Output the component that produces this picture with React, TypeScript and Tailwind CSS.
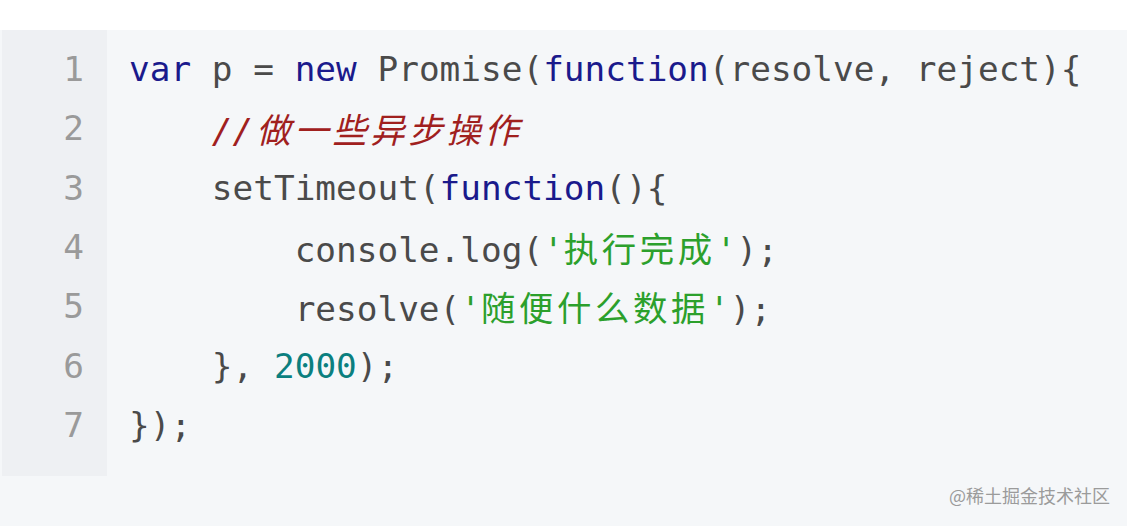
import React from "react";

const mono = { fontFamily: '"DejaVu Sans Mono", "Noto Sans CJK SC", monospace' };

const K = ({ children }: { children: React.ReactNode }) => <span className="text-[#1a1a8c]">{children}</span>;
const S = ({ children }: { children: React.ReactNode }) => <span className="text-[#2ca02c]">{children}</span>;
const Z = ({ children }: { children: React.ReactNode }) => (
  <span className="tracking-[3.6px]" style={{ fontFamily: '"Noto Sans CJK SC", sans-serif' }}>{children}</span>
);

export default function App() {
  const lines: React.ReactNode[] = [
    <>
      <K>var</K> p = <K>new</K> Promise(<K>function</K>(resolve, reject){"{"}
    </>,
    <>
      {"    "}
      <span className="italic text-[#a0201e]">
        //
        <span
          className="tracking-[3.6px] pl-[3px]"
          style={{ fontFamily: '"Noto Sans CJK SC", sans-serif' }}
        >
          做一些异步操作
        </span>
      </span>
    </>,
    <>
      {"    "}setTimeout(<K>function</K>(){"{"}
    </>,
    <>
      {"        "}console.log(<S>'<Z>执行完成</Z>'</S>);
    </>,
    <>
      {"        "}resolve(<S>'<Z>随便什么数据</Z>'</S>);
    </>,
    <>
      {"    "}{"}"}, <span className="text-[#0b7f7f]">2000</span>);
    </>,
    <>{"});"}</>,
  ];

  return (
    <div className="w-[1127px] h-[526px] bg-white overflow-hidden">
      <div className="mt-[30px] h-[496px] bg-[#f5f7f9] pl-[2px] flex flex-col">
        <div className="flex">
          <div
            className="w-[105px] bg-[#eef0f3] pt-[10px] pb-[21px] pr-[23px] text-right text-[#9a9a9a] text-[34.4px] leading-[59.33px]"
            style={mono}
          >
            {lines.map((_, i) => (
              <div key={i}>{i + 1}</div>
            ))}
          </div>
          <div
            className="pl-[22px] pt-[10px] text-[#4a4a4a] text-[34.4px] leading-[59.33px] whitespace-pre"
            style={mono}
          >
            {lines.map((l, i) => (
              <div key={i} className="h-[59.33px]">{l}</div>
            ))}
          </div>
        </div>
        <div className="flex-1 flex justify-end items-start pr-[17px] pt-[8px]">
          <span
            className="text-[#9b9b9b] text-[18px] leading-[22px]"
            style={{ fontFamily: '"Noto Sans CJK SC", sans-serif' }}
          >
            @稀土掘金技术社区
          </span>
        </div>
      </div>
    </div>
  );
}
